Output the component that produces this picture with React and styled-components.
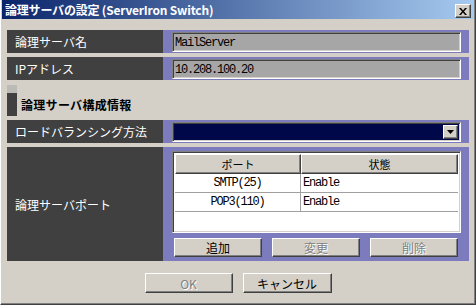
import React from "react";
import styled, { createGlobalStyle } from "styled-components";

const Global = createGlobalStyle`
  html, body { margin: 0; padding: 0; background: #d4d0c8; }
  body { font-family: "Noto Sans CJK JP", "Noto Sans", sans-serif; }
`;

const JP = `"Noto Sans CJK JP", "Noto Sans", sans-serif`;
const MONO = `"Liberation Mono", "DejaVu Sans Mono", monospace`;

const Window = styled.div`
  box-sizing: border-box;
  width: 476px;
  height: 305px;
  background: #d4d0c8;
  border-left: 1px solid #ffffff;
  border-right: 1px solid #404040;
  border-bottom: 1px solid #404040;
  box-shadow: inset -1px -1px 0 #808080;
  padding: 0 1px;
  display: flex;
  flex-direction: column;
  font-family: ${JP};
  font-size: 12px;
`;

const TitleBar = styled.div`
  height: 19px;
  flex: none;
  display: flex;
  align-items: center;
  padding: 0 3px 0 3px;
  background: linear-gradient(to right, #0a246a, #a6caf0);
`;

const TitleText = styled.span`
  color: #ffffff;
  font-weight: bold;
  font-size: 12px;
  line-height: 19px;
  letter-spacing: -0.2px;
  white-space: nowrap;
`;

const CloseButton = styled.div`
  box-sizing: border-box;
  margin-left: auto;
  align-self: flex-end;
  margin-bottom: 1px;
  width: 16px;
  height: 14px;
  background: #d4d0c8;
  border: 1px solid;
  border-color: #ffffff #404040 #404040 #ffffff;
  box-shadow: inset -1px -1px 0 #808080;
  display: flex;
  align-items: center;
  justify-content: center;
`;

const Content = styled.div`
  flex: 1;
  display: flex;
  flex-direction: column;
  padding: 11px 5px 0 5px;
`;

const Row = styled.div`
  display: grid;
  grid-template-columns: 156px 1fr;
  height: ${(p) => p.$h || 23}px;
  margin-bottom: ${(p) => (p.$mb === undefined ? 4 : p.$mb)}px;
`;

const Label = styled.div`
  background: #404040;
  color: #ffffff;
  display: flex;
  align-items: center;
  padding-left: 8px;
  font-size: 12px;
  white-space: nowrap;
`;

const ValueArea = styled.div`
  background: #7b7bbd;
  padding: ${(p) => p.$pad || "2px 8px 1px 9px"};
  display: flex;
  flex-direction: column;
`;

const Sunken = styled.div`
  box-sizing: border-box;
  border: 1px solid;
  border-color: #808080 #ffffff #ffffff #808080;
  box-shadow: inset 1px 1px 0 #404040, inset -1px -1px 0 #d4d0c8;
`;

const TextInput = styled(Sunken)`
  height: 20px;
  background: #a6a6a6;
  padding: 1px 2px 0 2px;
  display: flex;
  align-items: center;
  font-family: ${MONO};
  font-size: 12px;
  letter-spacing: -1.2px;
  color: #000000;
`;

const Select = styled(Sunken)`
  height: 20px;
  background: #00084a;
  padding: 2px;
  display: flex;
  justify-content: flex-end;
`;

const DropButton = styled.div`
  box-sizing: border-box;
  width: 15px;
  height: 100%;
  background: #d4d0c8;
  border: 1px solid;
  border-color: #ffffff #404040 #404040 #ffffff;
  box-shadow: inset -1px -1px 0 #808080;
  display: flex;
  align-items: center;
  justify-content: center;
`;

const SectionHeader = styled.div`
  display: flex;
  align-items: center;
  gap: 4px;
  height: 31px;
  margin: 5px 0 4px;
`;

const SectionMark = styled.div`
  width: 10px;
  height: 31px;
  box-sizing: border-box;
  background: #404040;
  border-top: 8px solid #bcbab4;
`;

const SectionTitle = styled.span`
  font-weight: bold;
  font-size: 12px;
  color: #000000;
  padding-top: 8px;
  letter-spacing: 0.3px;
`;

const TableBox = styled(Sunken)`
  height: 82px;
  background: #ffffff;
  padding: 2px;
  margin-bottom: 5px;
`;

const Grid = styled.div`
  display: grid;
  grid-template-columns: 126px 1fr;
`;

const HeadCell = styled.div`
  box-sizing: border-box;
  height: 20px;
  background: #d4d0c8;
  border: 1px solid;
  border-color: #ffffff #404040 #404040 #ffffff;
  box-shadow: inset -1px -1px 0 #808080;
  display: flex;
  align-items: center;
  justify-content: center;
  font-size: 11px;
  color: #000000;
`;

const Cell = styled.div`
  box-sizing: border-box;
  height: 19px;
  border-bottom: 1px solid #a0a0a0;
  border-right: ${(p) => (p.$first ? "1px solid #a0a0a0" : "none")};
  display: flex;
  align-items: center;
  justify-content: ${(p) => (p.$center ? "center" : "flex-start")};
  padding-left: ${(p) => (p.$center ? 0 : 2)}px;
  font-family: ${MONO};
  font-size: 12px;
  letter-spacing: -1.2px;
  color: #000000;
`;

const ButtonRow = styled.div`
  display: flex;
  gap: ${(p) => p.$gap || 10}px;
  justify-content: ${(p) => p.$justify || "flex-start"};
  padding-left: ${(p) => p.$pl || 0}px;
  margin-top: ${(p) => p.$mt || 0}px;
`;

const Button = styled.div`
  box-sizing: border-box;
  width: ${(p) => p.$w || 88}px;
  height: ${(p) => p.$h || 19}px;
  background: #d4d0c8;
  border: 1px solid;
  border-color: #ffffff #404040 #404040 #ffffff;
  box-shadow: inset -1px -1px 0 #808080;
  display: flex;
  align-items: center;
  justify-content: center;
  font-size: 12px;
  color: ${(p) => (p.$disabled ? "#808080" : "#000000")};
  text-shadow: ${(p) => (p.$disabled ? "1px 1px 0 #ffffff" : "none")};
`;

export default function App() {
  const ports = [
    { port: "SMTP(25)", state: "Enable" },
    { port: "POP3(110)", state: "Enable" },
  ];
  return (
    <>
      <Global />
      <Window>
        <TitleBar>
          <TitleText>論理サーバの設定 (ServerIron Switch)</TitleText>
          <CloseButton>
            <svg width="8" height="7" viewBox="0 0 8 7">
              <path d="M0 0h2l2 2.5L6 0h2L5 3.5 8 7H6L4 4.5 2 7H0l3-3.5z" fill="#000" />
            </svg>
          </CloseButton>
        </TitleBar>
        <Content>
          <Row>
            <Label>論理サーバ名</Label>
            <ValueArea>
              <TextInput>MailServer</TextInput>
            </ValueArea>
          </Row>
          <Row $mb={0}>
            <Label>IPアドレス</Label>
            <ValueArea>
              <TextInput>10.208.100.20</TextInput>
            </ValueArea>
          </Row>
          <SectionHeader>
            <SectionMark />
            <SectionTitle>論理サーバ構成情報</SectionTitle>
          </SectionHeader>
          <Row>
            <Label>ロードバランシング方法</Label>
            <ValueArea>
              <Select>
                <DropButton>
                  <svg width="7" height="4" viewBox="0 0 7 4">
                    <path d="M0 0h7L3.5 4z" fill="#000" />
                  </svg>
                </DropButton>
              </Select>
            </ValueArea>
          </Row>
          <Row $h={114} $mb={0}>
            <Label>論理サーバポート</Label>
            <ValueArea $pad="4px 8px 4px 9px">
              <TableBox>
                <Grid>
                  <HeadCell>ポート</HeadCell>
                  <HeadCell>状態</HeadCell>
                  {ports.map((p) => (
                    <React.Fragment key={p.port}>
                      <Cell $first $center>{p.port}</Cell>
                      <Cell>{p.state}</Cell>
                    </React.Fragment>
                  ))}
                </Grid>
              </TableBox>
              <ButtonRow $pl={2}>
                <Button>追加</Button>
                <Button $disabled>変更</Button>
                <Button $disabled>削除</Button>
              </ButtonRow>
            </ValueArea>
          </Row>
          <ButtonRow $justify="center" $mt={12}>
            <Button $h={20} $disabled>OK</Button>
            <Button $h={20} $w={89}>キャンセル</Button>
          </ButtonRow>
        </Content>
      </Window>
    </>
  );
}
